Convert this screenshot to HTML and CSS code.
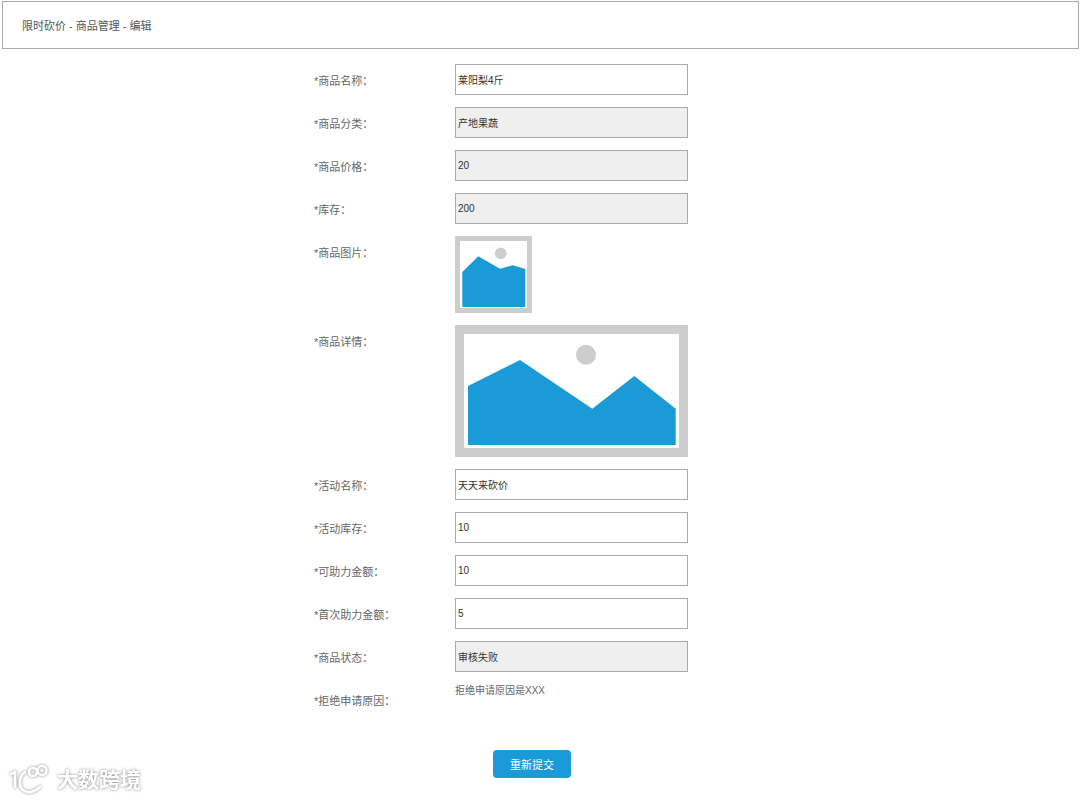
FILE: index.html
```html
<!DOCTYPE html>
<html lang="zh-CN">
<head>
<meta charset="utf-8">
<title>限时砍价 - 商品管理 - 编辑</title>
<link rel="stylesheet" href="styles.css">
</head>
<body>
<header class="topbar">限时砍价 - 商品管理 - 编辑</header>
<form class="form">
  <div class="row"><label class="label">*商品名称：</label><input class="field" value="莱阳梨4斤"></div>
  <div class="row"><label class="label">*商品分类：</label><input class="field field-off" readonly value="产地果蔬"></div>
  <div class="row"><label class="label">*商品价格：</label><input class="field field-off" readonly value="20"></div>
  <div class="row"><label class="label">*库存：</label><input class="field field-off" readonly value="200"></div>
  <div class="row"><label class="label">*商品图片：</label>
    <svg class="pic" width="77" height="77" viewBox="0 0 77 77">
      <rect x="2.5" y="2.5" width="72" height="72" fill="#fff" stroke="#cdcdcd" stroke-width="5"/>
      <circle cx="45.7" cy="17.3" r="5.8" fill="#cdcdcd"/>
      <path d="M7.3 36 23.3 20.3 45 32.7 57.7 29.3 70.3 33V71H7.3Z" fill="#1a9bd7"/>
    </svg>
  </div>
  <div class="row"><label class="label">*商品详情：</label>
    <svg class="pic" width="233" height="132" viewBox="0 0 233 132">
      <rect x="4.5" y="4.5" width="224" height="123" fill="#fff" stroke="#cdcdcd" stroke-width="9"/>
      <circle cx="131" cy="29.7" r="10" fill="#cdcdcd"/>
      <path d="M13 61 65 35 137.3 83.7 179.3 51 220.7 83.7V120H13Z" fill="#1a9bd7"/>
    </svg>
  </div>
  <div class="row"><label class="label">*活动名称：</label><input class="field" value="天天来砍价"></div>
  <div class="row"><label class="label">*活动库存：</label><input class="field" value="10"></div>
  <div class="row"><label class="label">*可助力金额：</label><input class="field" value="10"></div>
  <div class="row"><label class="label">*首次助力金额：</label><input class="field" value="5"></div>
  <div class="row"><label class="label">*商品状态：</label><input class="field field-off" readonly value="审核失败"></div>
  <div class="row"><label class="label">*拒绝申请原因：</label><p class="reason">拒绝申请原因是XXX</p></div>
  <button class="submit" type="button">重新提交</button>
</form>
<div class="watermark">
  <svg class="mark" width="46" height="32" viewBox="0 0 46 32">
    <g fill="none" stroke="#fff" stroke-width="2.6" stroke-linecap="round">
      <path d="M3 10 7 8V23"/>
      <path d="M17 8C11 12 10 22 15 26 20 30 27 28 32 23"/>
      <circle cx="25" cy="8" r="4"/>
      <circle cx="34" cy="6.5" r="4.5"/>
    </g>
  </svg>
  <span class="mark-text">大数跨境</span>
</div>
</body>
</html>
```

FILE: styles.css
```css
* { box-sizing: border-box; }

body {
  margin: 0;
  font-family: "Liberation Sans", "Noto Sans CJK SC", sans-serif;
  font-size: 11px;
  color: #666;
  background: #fff;
}

.topbar {
  height: 48px;
  margin: 1px 1px 0 2px;
  padding-left: 19px;
  border: 1px solid #aaa;
  line-height: 48px;
  color: #555;
}

.form {
  display: flex;
  flex-direction: column;
  gap: 12px;
  margin-top: 15px;
  padding-left: 314px;
}

.row {
  display: flex;
  align-items: flex-start;
}

.label {
  flex: none;
  width: 141px;
  height: 31px;
  line-height: 35px;
}

.field {
  width: 233px;
  height: 31px;
  padding: 0 2px;
  border: 1px solid #aaa;
  border-radius: 0;
  outline: 0;
  font: inherit;
  font-size: 10px;
  color: #333;
  background: #fff;
}

.field-off {
  background: #efefef;
}

.pic {
  display: block;
}

.reason {
  margin: 0;
  font-size: 10px;
  line-height: 14px;
}

.submit {
  width: 78px;
  height: 28px;
  margin: 23px 0 0 179px;
  padding: 0;
  border: 0;
  border-radius: 4px;
  font: inherit;
  color: #fff;
  background: #1a9bd7;
}

.watermark {
  position: absolute;
  left: 8px;
  top: 764px;
  display: flex;
  align-items: center;
  gap: 3px;
  filter: drop-shadow(0 0 1.5px #888);
}

.mark {
  display: block;
}

.mark-text {
  font-size: 21px;
  line-height: 28px;
  color: #fff;
  font-weight: 700;
}
```
